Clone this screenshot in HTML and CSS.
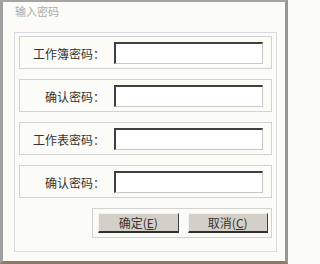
FILE: index.html
```html
<!DOCTYPE html>
<html lang="zh-CN">
<head>
<meta charset="utf-8">
<title>输入密码</title>
<link rel="stylesheet" href="styles.css">
</head>
<body>
<div class="window">
  <div class="title">输入密码</div>
  <div class="panel">
    <div class="row">
      <label class="label">工作簿密码<span class="colon">：</span></label>
      <input class="field" type="password">
    </div>
    <div class="row">
      <label class="label">确认密码<span class="colon">：</span></label>
      <input class="field" type="password">
    </div>
    <div class="row">
      <label class="label">工作表密码<span class="colon">：</span></label>
      <input class="field" type="password">
    </div>
    <div class="row">
      <label class="label">确认密码<span class="colon">：</span></label>
      <input class="field" type="password">
    </div>
    <div class="buttons">
      <button class="btn">确定(<u>E</u>)</button>
      <button class="btn">取消(<u>C</u>)</button>
    </div>
  </div>
</div>
</body>
</html>
```
FILE: styles.css
```css
html, body {
  margin: 0;
  padding: 0;
  background: #fbfbf8;
}
.window {
  box-sizing: border-box;
  width: 288px;
  height: 264px;
  background: #fbfbf8;
  border-top: 2px solid #a4a4a4;
  border-left: 3px solid #a0a0a0;
  border-right: 3px solid #969696;
  border-bottom: 3px solid #8c7a68;
  font-family: "Noto Sans CJK SC", "Noto Sans", sans-serif;
  display: flex;
  flex-direction: column;
}
.title {
  height: 30px;
  box-sizing: border-box;
  padding: 1px 0 0 12px;
  font-size: 11px;
  line-height: 16px;
  color: #acacac;
}
.panel {
  box-sizing: border-box;
  margin-left: 11px;
  width: 263px;
  height: 220px;
  border: 1px solid #d6dbe2;
  padding: 3px 4px 0 4px;
  display: flex;
  flex-direction: column;
  gap: 10px;
}
.row {
  box-sizing: border-box;
  height: 33px;
  border: 1px solid #d2d2d2;
  display: flex;
  align-items: center;
  gap: 9px;
}
.label {
  width: 85px;
  text-align: right;
  font-size: 12px;
  color: #333;
  white-space: nowrap;
  margin-top: 1px;
}
.colon {
  font-family: "Noto Sans CJK TC", "Noto Sans CJK SC", sans-serif;
}
.field {
  box-sizing: border-box;
  width: 149px;
  height: 22px;
  margin: 0;
  padding: 0;
  background: #fff;
  border-top: 2px solid #404040;
  border-left: 2px solid #404040;
  border-right: 1px solid #c8c8c8;
  border-bottom: 1px solid #c8c8c8;
  outline: none;
}
.buttons {
  box-sizing: border-box;
  margin-left: 73px;
  height: 30px;
  border: 1px solid #d2d2d2;
  display: flex;
  align-items: center;
  justify-content: flex-end;
  gap: 9px;
  padding: 0 3px 0 5px;
}
.btn {
  box-sizing: border-box;
  width: 81px;
  height: 20px;
  margin: 0;
  padding: 0;
  background: #d4d0c8;
  border-top: 1px solid #f4f2ee;
  border-left: 1px solid #f4f2ee;
  border-right: 1px solid #404040;
  border-bottom: 2px solid #303030;
  font-family: "Noto Sans CJK SC", "Noto Sans", sans-serif;
  font-size: 12px;
  line-height: 16px;
  color: #333;
}
```
